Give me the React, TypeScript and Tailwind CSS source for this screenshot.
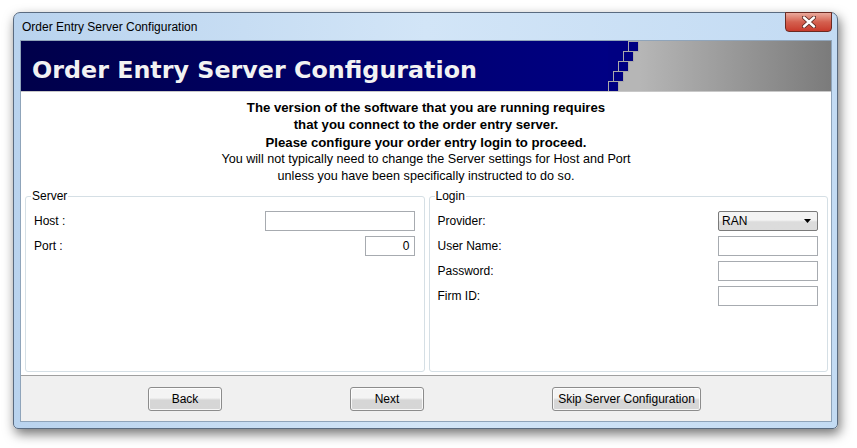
import React from 'react';

const ui = "font-['Liberation_Sans',Arial,sans-serif]";

function Field({ label, value, width }: { label: string; value?: string; width: string }) {
  return (
    <div className="flex h-[20px] items-center justify-between">
      <span className="text-[12px] text-black">{label}</span>
      <div
        className={`${width} h-[20px] border border-[#a7abb0] bg-white text-right text-[12px] leading-[18px] pr-[4px] text-black`}
      >
        {value}
      </div>
    </div>
  );
}

function Button({ label, width }: { label: string; width: string }) {
  return (
    <button
      className={`${width} h-[24px] rounded-[3px] border border-[#8c8c8c] bg-gradient-to-b from-[#f4f4f4] from-45% to-[#d6d6d6] to-55% text-[12px] text-black shadow-[inset_0_0_0_1px_rgba(255,255,255,0.8)]`}
    >
      {label}
    </button>
  );
}

function Stairs() {
  const rows = [20, 15, 10, 5, 0];
  return (
    <svg width="32" height="50" viewBox="0 0 32 50" className="block shrink-0">
      <rect x="0" y="0" width="32" height="50" fill="#b6b6b6" />
      {rows.map((x, i) => (
        <g key={i}>
          <rect x="0" y={i * 10} width={x} height="10" fill="#000082" />
          <rect x={x + 0.5} y={i * 10 + 0.5} width="10" height="10" fill="#000082" stroke="#a9a9a9" strokeWidth="1" />
        </g>
      ))}
    </svg>
  );
}

export default function App() {
  return (
    <div className={`${ui} min-h-[448px] w-[857px] bg-white pl-[13px] pt-[12px]`}>
      <div className="flex h-[417px] w-[825px] flex-col rounded-t-[7px] rounded-b-[5px] border border-[#5a6b80] bg-gradient-to-r from-[#b9d3ee] via-[#d2e5f7] to-[#c3dbf3] shadow-[2px_5px_12px_rgba(0,0,0,0.55)]">
        {/* title bar */}
        <div className="flex h-[27px] shrink-0 items-start justify-between">
          <span className="pl-[8px] pt-[7px] text-[12px] leading-[15px] text-black">
            Order Entry Server Configuration
          </span>
          <div className="mr-[5px] -mt-px flex h-[20px] w-[47px] items-center justify-center rounded-b-[4px] border border-[#6b2a22] bg-gradient-to-b from-[#e9a99c] from-0% via-[#d4604f] via-50% to-[#c83a2c]">
            <svg width="14" height="12" viewBox="0 0 14 12">
              <path d="M2 1.5 L12 10.5 M12 1.5 L2 10.5" stroke="#5a2a24" strokeWidth="4.2" strokeLinecap="round" />
              <path d="M2 1.5 L12 10.5 M12 1.5 L2 10.5" stroke="#ffffff" strokeWidth="2.4" strokeLinecap="round" />
            </svg>
          </div>
        </div>

        {/* client */}
        <div className="ml-[6px] mr-[5px] flex h-[382px] flex-col border border-[#8fa4ba] bg-white">
          {/* banner */}
          <div className="flex h-[51px] shrink-0 border-b border-[#c8c8c8]">
            <div className="flex flex-1 items-center bg-gradient-to-r from-[#00004a] to-[#000084] pl-[11px] pt-[9px]">
              <span className="font-['DejaVu_Sans',Verdana,sans-serif] text-[23.8px] font-bold leading-none text-[#f2f2f2]">
                Order Entry Server Configuration
              </span>
            </div>
            <Stairs />
            <div className="w-[191px] bg-gradient-to-r from-[#b6b6b6] to-[#7b7b7b]" />
          </div>

          {/* message */}
          <div className="flex flex-1 flex-col">
            <div className="pt-[7px] text-center leading-[17.25px] text-black">
              <p className="text-[13.2px] font-bold">The version of the software that you are running requires</p>
              <p className="text-[13.2px] font-bold">that you connect to the order entry server.</p>
              <p className="text-[13.2px] font-bold">Please configure your order entry login to proceed.</p>
              <p className="text-[12.6px]">You will not typically need to change the Server settings for Host and Port</p>
              <p className="text-[12.6px]">unless you have been specifically instructed to do so.</p>
            </div>

            <div className="mt-[4px] flex flex-1 gap-[4px] pb-[3px] pl-[4px] pr-[3px]">
              <fieldset className="flex flex-1 flex-col gap-[5px] rounded-[3px] border border-[#d5dfe5] pl-[8px] pr-[9px]">
                <legend className="-ml-[3px] px-[1px] text-[12px] leading-[14px] text-black">Server</legend>
                <div className="h-[3px]" />
                <Field label="Host :" width="w-[150px]" />
                <Field label="Port :" value="0" width="w-[50px]" />
              </fieldset>
              <fieldset className="flex flex-1 flex-col gap-[5px] rounded-[3px] border border-[#d5dfe5] pl-[8px] pr-[9px]">
                <legend className="-ml-[3px] px-[1px] text-[12px] leading-[14px] text-black">Login</legend>
                <div className="h-[3px]" />
                <div className="flex h-[20px] items-center justify-between">
                  <span className="text-[12px] text-black">Provider:</span>
                  <div className="flex h-[20px] w-[100px] items-center justify-between rounded-[2px] border border-[#7a7a7a] bg-gradient-to-b from-[#f3f3f3] from-45% to-[#dcdcdc] to-55% pl-[3px] pr-[6px] text-[12px] text-black">
                    <span>RAN</span>
                    <svg width="7" height="4" viewBox="0 0 7 4">
                      <path d="M0 0 H7 L3.5 4 Z" fill="#000" />
                    </svg>
                  </div>
                </div>
                <Field label="User Name:" width="w-[100px]" />
                <Field label="Password:" width="w-[100px]" />
                <Field label="Firm ID:" width="w-[100px]" />
              </fieldset>
            </div>
          </div>

          {/* button bar */}
          <div className="flex h-[46px] shrink-0 gap-[128px] border-t border-[#a0a0a0] bg-[#f0f0f0] pl-[127px] pt-[11px]">
            <Button label="Back" width="w-[74px]" />
            <Button label="Next" width="w-[74px]" />
            <Button label="Skip Server Configuration" width="w-[149px]" />
          </div>
        </div>
      </div>
    </div>
  );
}
